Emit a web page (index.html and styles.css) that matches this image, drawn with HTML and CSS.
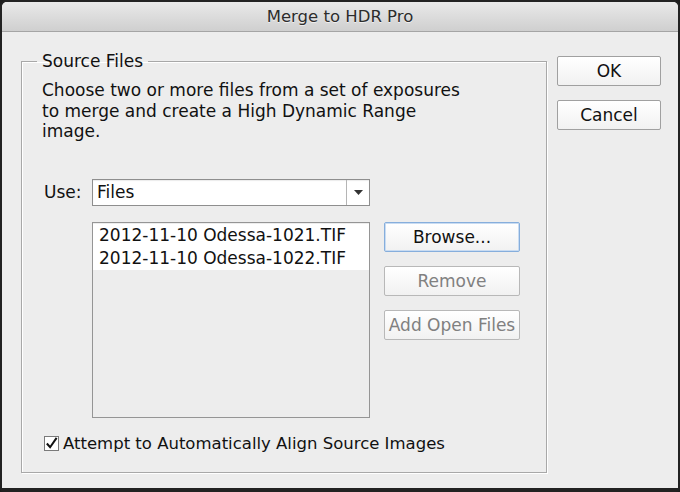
FILE: index.html
```html
<!DOCTYPE html>
<html lang="en">
<head>
  <meta charset="UTF-8">
  <title>Merge to HDR Pro</title>
  <link rel="stylesheet" href="styles.css">
</head>
<body>
  <div class="window">
    <div class="titlebar">Merge to HDR Pro</div>
    <div class="main">
      <fieldset class="group">
        <legend>Source Files</legend>
        <p class="desc">Choose two or more files from a set of exposures to merge and create a High Dynamic Range image.</p>

        <div class="use-row">
          <span class="use-label">Use:</span>
          <div class="select">
            <span class="select-value">Files</span>
            <span class="select-arrow">
              <svg width="9" height="5" viewBox="0 0 9 5"><path d="M0 0 H9 L4.5 5 Z" fill="#333"/></svg>
            </span>
          </div>
        </div>

        <div class="files-row">
          <ul class="file-list">
            <li>2012-11-10 Odessa-1021.TIF</li>
            <li>2012-11-10 Odessa-1022.TIF</li>
          </ul>
          <div class="file-buttons">
            <button class="btn focus">Browse...</button>
            <button class="btn disabled">Remove</button>
            <button class="btn disabled">Add Open Files</button>
          </div>
        </div>

        <label class="check-row">
          <span class="checkbox">
            <svg width="14" height="13" viewBox="0 0 14 13"><path d="M2 6.5 L5.5 10.5 L12.5 0.5" fill="none" stroke="#111" stroke-width="2.2"/></svg>
          </span>
          Attempt to Automatically Align Source Images
        </label>
      </fieldset>

      <div class="side">
        <button class="btn dialog-btn">OK</button>
        <button class="btn dialog-btn">Cancel</button>
      </div>
    </div>
  </div>
</body>
</html>
```

FILE: styles.css
```css
* {
  margin: 0;
  padding: 0;
  box-sizing: border-box;
}

body {
  width: 680px;
  height: 492px;
  background: #1c1c1c;
  font-family: "DejaVu Sans", "Liberation Sans", sans-serif;
  color: #111;
  overflow: hidden;
}

.window {
  width: 680px;
  height: 492px;
  background: #ededed;
  border: 2px solid #222;
  border-bottom-width: 4px;
  border-radius: 7px 7px 4px 4px;
  overflow: hidden;
}

.titlebar {
  height: 30px;
  line-height: 29px;
  text-align: center;
  font-size: 16.5px;
  color: #2c2c2c;
  text-shadow: 0 1px 0 rgba(255, 255, 255, 0.6);
  background: linear-gradient(#e9e9e9, #cfcfcf);
  border-bottom: 1px solid #a5a5a5;
}

.main {
  display: flex;
  padding: 19px 0 0 19px;
}

.group {
  width: 526px;
  height: 422px;
  border: 1px solid #a8a8a8;
  box-shadow: inset 1px 1px 0 #fff, 1px 1px 0 #fff;
  padding: 0 20px;
}

.group legend {
  font-size: 17px;
  line-height: 20px;
  padding: 0 5px;
  margin-left: -5px;
}

.desc {
  margin-top: 9px;
  font-size: 17px;
  line-height: 20.5px;
  width: 432px;
}

.use-row {
  display: flex;
  align-items: center;
  margin-top: 37px;
}

.use-label {
  font-size: 17px;
  width: 50px;
  padding-left: 2px;
}

.select {
  display: flex;
  width: 278px;
  height: 27px;
  background: #fff;
  border: 1px solid #8e8e8e;
  box-shadow: inset 0 1px 1px rgba(0, 0, 0, 0.08);
}

.select-value {
  flex: 1;
  font-size: 17px;
  line-height: 25px;
  padding-left: 4px;
}

.select-arrow {
  width: 23px;
  border-left: 1px solid #b5b5b5;
  display: flex;
  align-items: center;
  justify-content: center;
}

.files-row {
  display: flex;
  gap: 14px;
  margin-top: 16px;
  margin-left: 50px;
}

.file-list {
  list-style: none;
  width: 278px;
  height: 196px;
  border: 1px solid #959595;
  padding-top: 1px;
}

.file-list li {
  background: #fff;
  font-size: 17px;
  height: 23px;
  line-height: 23px;
  padding-left: 6px;
}

.file-buttons {
  display: flex;
  flex-direction: column;
  gap: 14px;
}

.btn {
  width: 136px;
  height: 30px;
  font-family: inherit;
  font-size: 17px;
  color: #111;
  background: linear-gradient(#ffffff, #f1f1f1);
  border: 1px solid #a0a0a0;
  border-radius: 2px;
}

.btn.focus {
  border-color: #86aedc;
  box-shadow: inset 0 0 0 1px #c9dcf2;
}

.btn.disabled {
  color: #808080;
  border-color: #b8b8b8;
}

.side {
  display: flex;
  flex-direction: column;
  gap: 14px;
  margin: 5px 0 0 10px;
}

.dialog-btn {
  width: 104px;
}

.check-row {
  display: flex;
  align-items: center;
  gap: 4px;
  margin-top: 16px;
  font-size: 16.5px;
}

.checkbox {
  width: 15px;
  height: 15px;
  border: 1px solid #7a7a7a;
  background: #fff;
  display: flex;
  align-items: flex-end;
  justify-content: center;
  margin-left: 2px;
  overflow: visible;
}
```
